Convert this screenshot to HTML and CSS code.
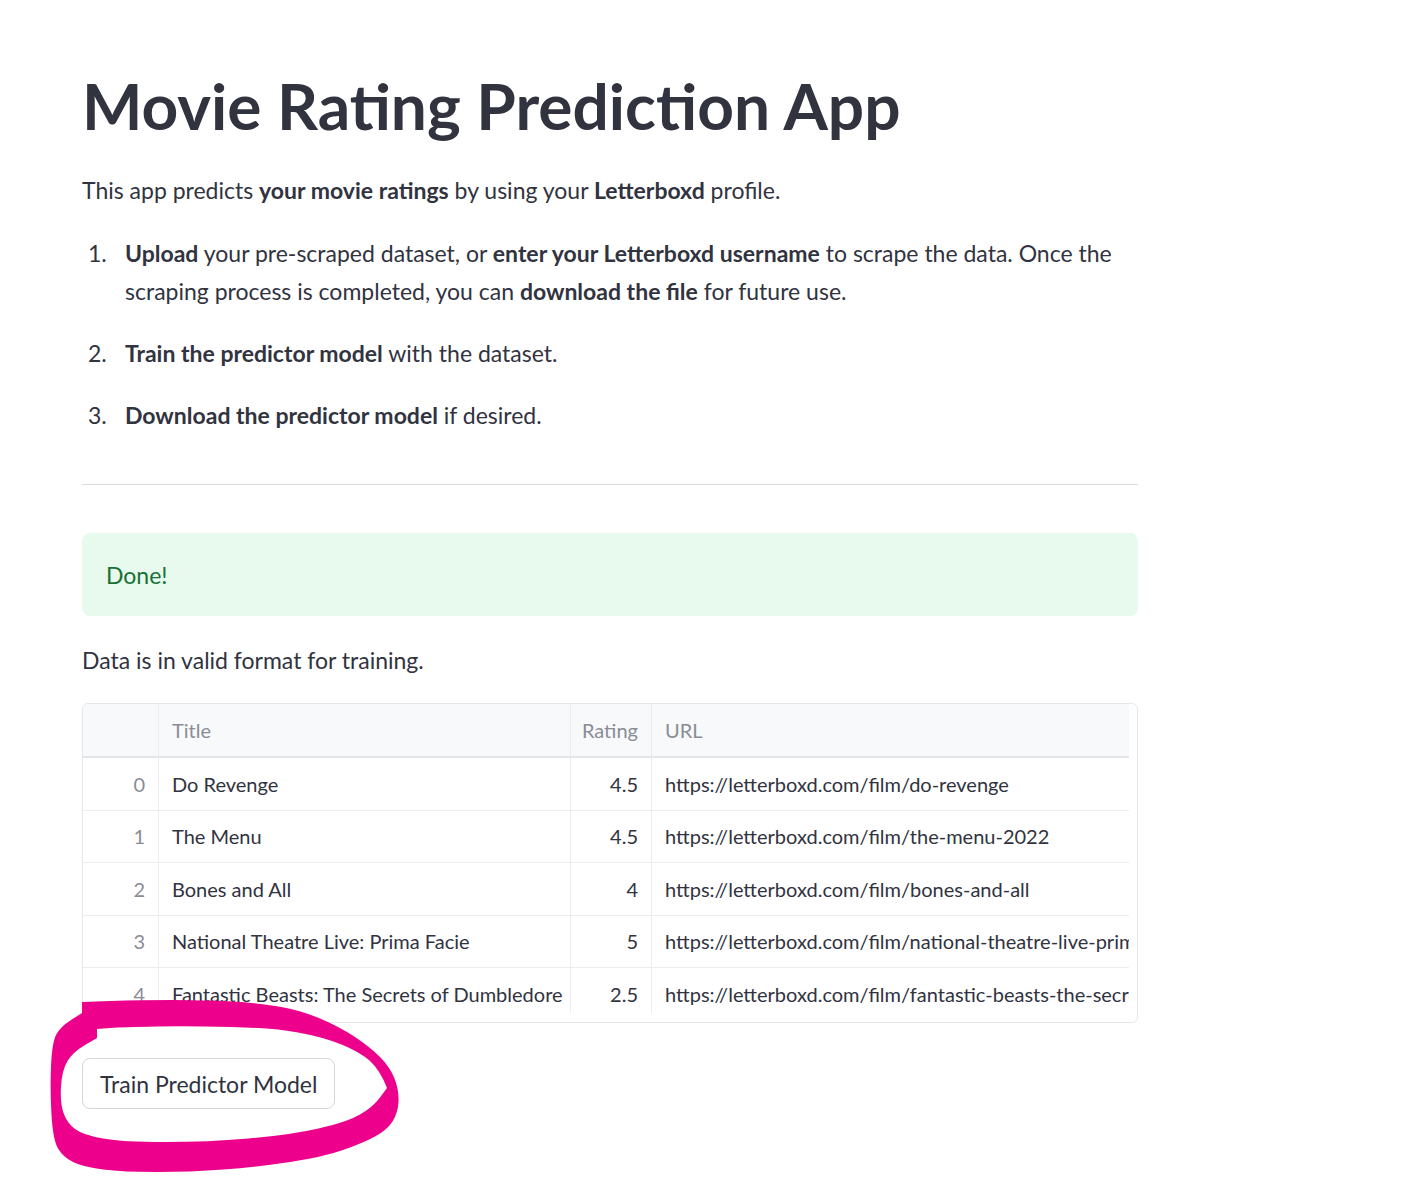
FILE: index.html
```html
<!DOCTYPE html>
<html lang="en">
<head>
<meta charset="utf-8">
<title>Movie Rating Prediction App</title>
<link rel="stylesheet" href="styles.css">
</head>
<body>
<main class="main">
  <h1 class="title">Movie Rating Prediction App</h1>
  <p class="intro">This app predicts <strong>your movie ratings</strong> by using your <strong>Letterboxd</strong> profile.</p>
  <ol class="steps">
    <li><strong>Upload</strong> your pre-scraped dataset, or <strong>enter your Letterboxd username</strong> to scrape the data. Once the scraping process is completed, you can <strong>download the file</strong> for future use.</li>
    <li><strong>Train the predictor model</strong> with the dataset.</li>
    <li><strong>Download the predictor model</strong> if desired.</li>
  </ol>
  <hr class="divider">
  <div class="alert-success">Done!</div>
  <p class="note">Data is in valid format for training.</p>
  <div class="table-frame">
    <div class="table-view">
      <div class="grid">
        <div class="cell head idx"></div>
        <div class="cell head">Title</div>
        <div class="cell head num">Rating</div>
        <div class="cell head">URL</div>

        <div class="cell idx">0</div>
        <div class="cell">Do Revenge</div>
        <div class="cell num">4.5</div>
        <div class="cell">https://letterboxd.com/film/do-revenge</div>

        <div class="cell idx">1</div>
        <div class="cell">The Menu</div>
        <div class="cell num">4.5</div>
        <div class="cell">https://letterboxd.com/film/the-menu-2022</div>

        <div class="cell idx">2</div>
        <div class="cell">Bones and All</div>
        <div class="cell num">4</div>
        <div class="cell">https://letterboxd.com/film/bones-and-all</div>

        <div class="cell idx">3</div>
        <div class="cell">National Theatre Live: Prima Facie</div>
        <div class="cell num">5</div>
        <div class="cell">https://letterboxd.com/film/national-theatre-live-prima-facie</div>

        <div class="cell idx">4</div>
        <div class="cell">Fantastic Beasts: The Secrets of Dumbledore</div>
        <div class="cell num">2.5</div>
        <div class="cell">https://letterboxd.com/film/fantastic-beasts-the-secrets-of-dumbledore</div>
      </div>
    </div>
  </div>
  <div class="actions">
    <button class="btn" type="button">Train Predictor Model</button>
  </div>
</main>
<svg class="scribble" width="1420" height="1177" viewBox="0 0 1420 1177" aria-hidden="true">
  <path fill="#ec008c" fill-rule="evenodd" d="
    M 82,1002 L 111,1001 Q 140,1000 173.5,1000 Q 207,1000 232,1001.5 Q 257,1003 278.5,1006.5 Q 300,1010 320,1018.5 Q 340,1027 355,1037 Q 370,1047 380,1057 Q 390,1067 394.5,1078.5 Q 399,1090 398.5,1101.5 Q 398,1113 392.5,1121.5 Q 387,1130 375,1136.5 Q 363,1143 343,1150 Q 323,1157 290,1162 Q 257,1167 223.5,1169.5 Q 190,1172 156.5,1172 Q 123,1172 103,1169.5 Q 83,1167 73,1162 Q 63,1157 58,1148.5 Q 53,1140 51.5,1115 Q 50,1090 51,1066.5 Q 52,1043 56,1035 Q 60,1027 71,1020 L 82,1013 Z
    M 97,1029 L 110,1028 Q 123,1027 156.5,1026.5 Q 190,1026 231.5,1027 Q 273,1028 298,1032.5 Q 323,1037 341.5,1044.5 Q 360,1052 370,1061 Q 380,1070 387,1088 L 380,1097.5 Q 373,1107 360,1114.5 Q 347,1122 318.5,1128.5 Q 290,1135 248.5,1138.5 Q 207,1142 165,1142 Q 123,1142 103,1138.5 Q 83,1135 75,1129 Q 67,1123 63.5,1113 Q 60,1103 61,1086.5 Q 62,1070 67.5,1061 Q 73,1052 85,1045 L 97,1038 Z"/>
</svg>
</body>
</html>
```

FILE: styles.css
```css
* { box-sizing: border-box; }

html, body {
  margin: 0;
  padding: 0;
  background: #ffffff;
}

body {
  font-family: "Source Sans Pro", "Lato", "Noto Sans", sans-serif;
  color: #31333f;
  width: 1420px;
  min-height: 1177px;
  position: relative;
}

.main {
  width: 1056px;
  margin-left: 82px;
  display: flex;
  flex-direction: column;
  padding-top: 67px;
}

.title {
  margin: 0;
  font-size: 64px;
  line-height: 77px;
  font-weight: 700;
  letter-spacing: 0;
  color: #31333f;
}

.intro {
  margin: 27px 0 0;
  font-size: 23px;
  line-height: 38px;
}

.intro strong, .steps strong { font-weight: 700; }

.steps {
  margin: 25px 0 0;
  padding-left: 43px;
  font-size: 23px;
  line-height: 38px;
  list-style: none;
}

.steps li {
  margin-bottom: 24px;
  counter-increment: step;
}

.steps li::before {
  content: counter(step) ".";
  display: inline-block;
  box-sizing: border-box;
  width: 43px;
  margin-left: -43px;
  padding-left: 6px;
}

.steps li:last-child { margin-bottom: 0; }

.divider {
  margin: 50px 0 0;
  border: 0;
  height: 1px;
  background: #dadadd;
}

.alert-success {
  margin-top: 48px;
  height: 83px;
  padding: 0 24px;
  display: flex;
  align-items: center;
  background: #e8f9ee;
  color: #177233;
  border-radius: 8px;
  font-size: 23px;
}

.note {
  margin: 25px 0 0;
  font-size: 23px;
  line-height: 38px;
}

.table-frame {
  margin-top: 24px;
  height: 320px;
  border: 1px solid #e6e7ea;
  border-radius: 6px;
  padding: 0 8px 9px 0;
  overflow: hidden;
}

.table-view {
  height: 100%;
  overflow: hidden;
}

.grid {
  display: grid;
  grid-template-columns: 76px 412px 81px 478px;
  grid-template-rows: 54px repeat(5, 52.5px);
  font-size: 20px;
}

.cell {
  border-right: 1px solid #ebecef;
  border-bottom: 1px solid #ebecef;
  padding: 0 13px;
  display: flex;
  align-items: center;
  white-space: nowrap;
  overflow: hidden;
  color: #31333f;
}

.cell:nth-child(4n) { border-right: 0; }

.head {
  background: #f8f9fb;
  color: #8a8c96;
  border-bottom-width: 2px;
  border-bottom-color: #e4e5e9;
}

.idx {
  justify-content: flex-end;
  color: #8a8c96;
}

.num { justify-content: flex-end; }

.actions {
  margin-top: 35px;
  display: flex;
}

.btn {
  height: 51px;
  padding: 0 17px;
  font-family: inherit;
  font-size: 23px;
  color: #31333f;
  background: #ffffff;
  border: 1px solid #d6d6d9;
  border-radius: 8px;
}

.scribble {
  position: absolute;
  left: 0;
  top: 0;
  pointer-events: none;
}
```
